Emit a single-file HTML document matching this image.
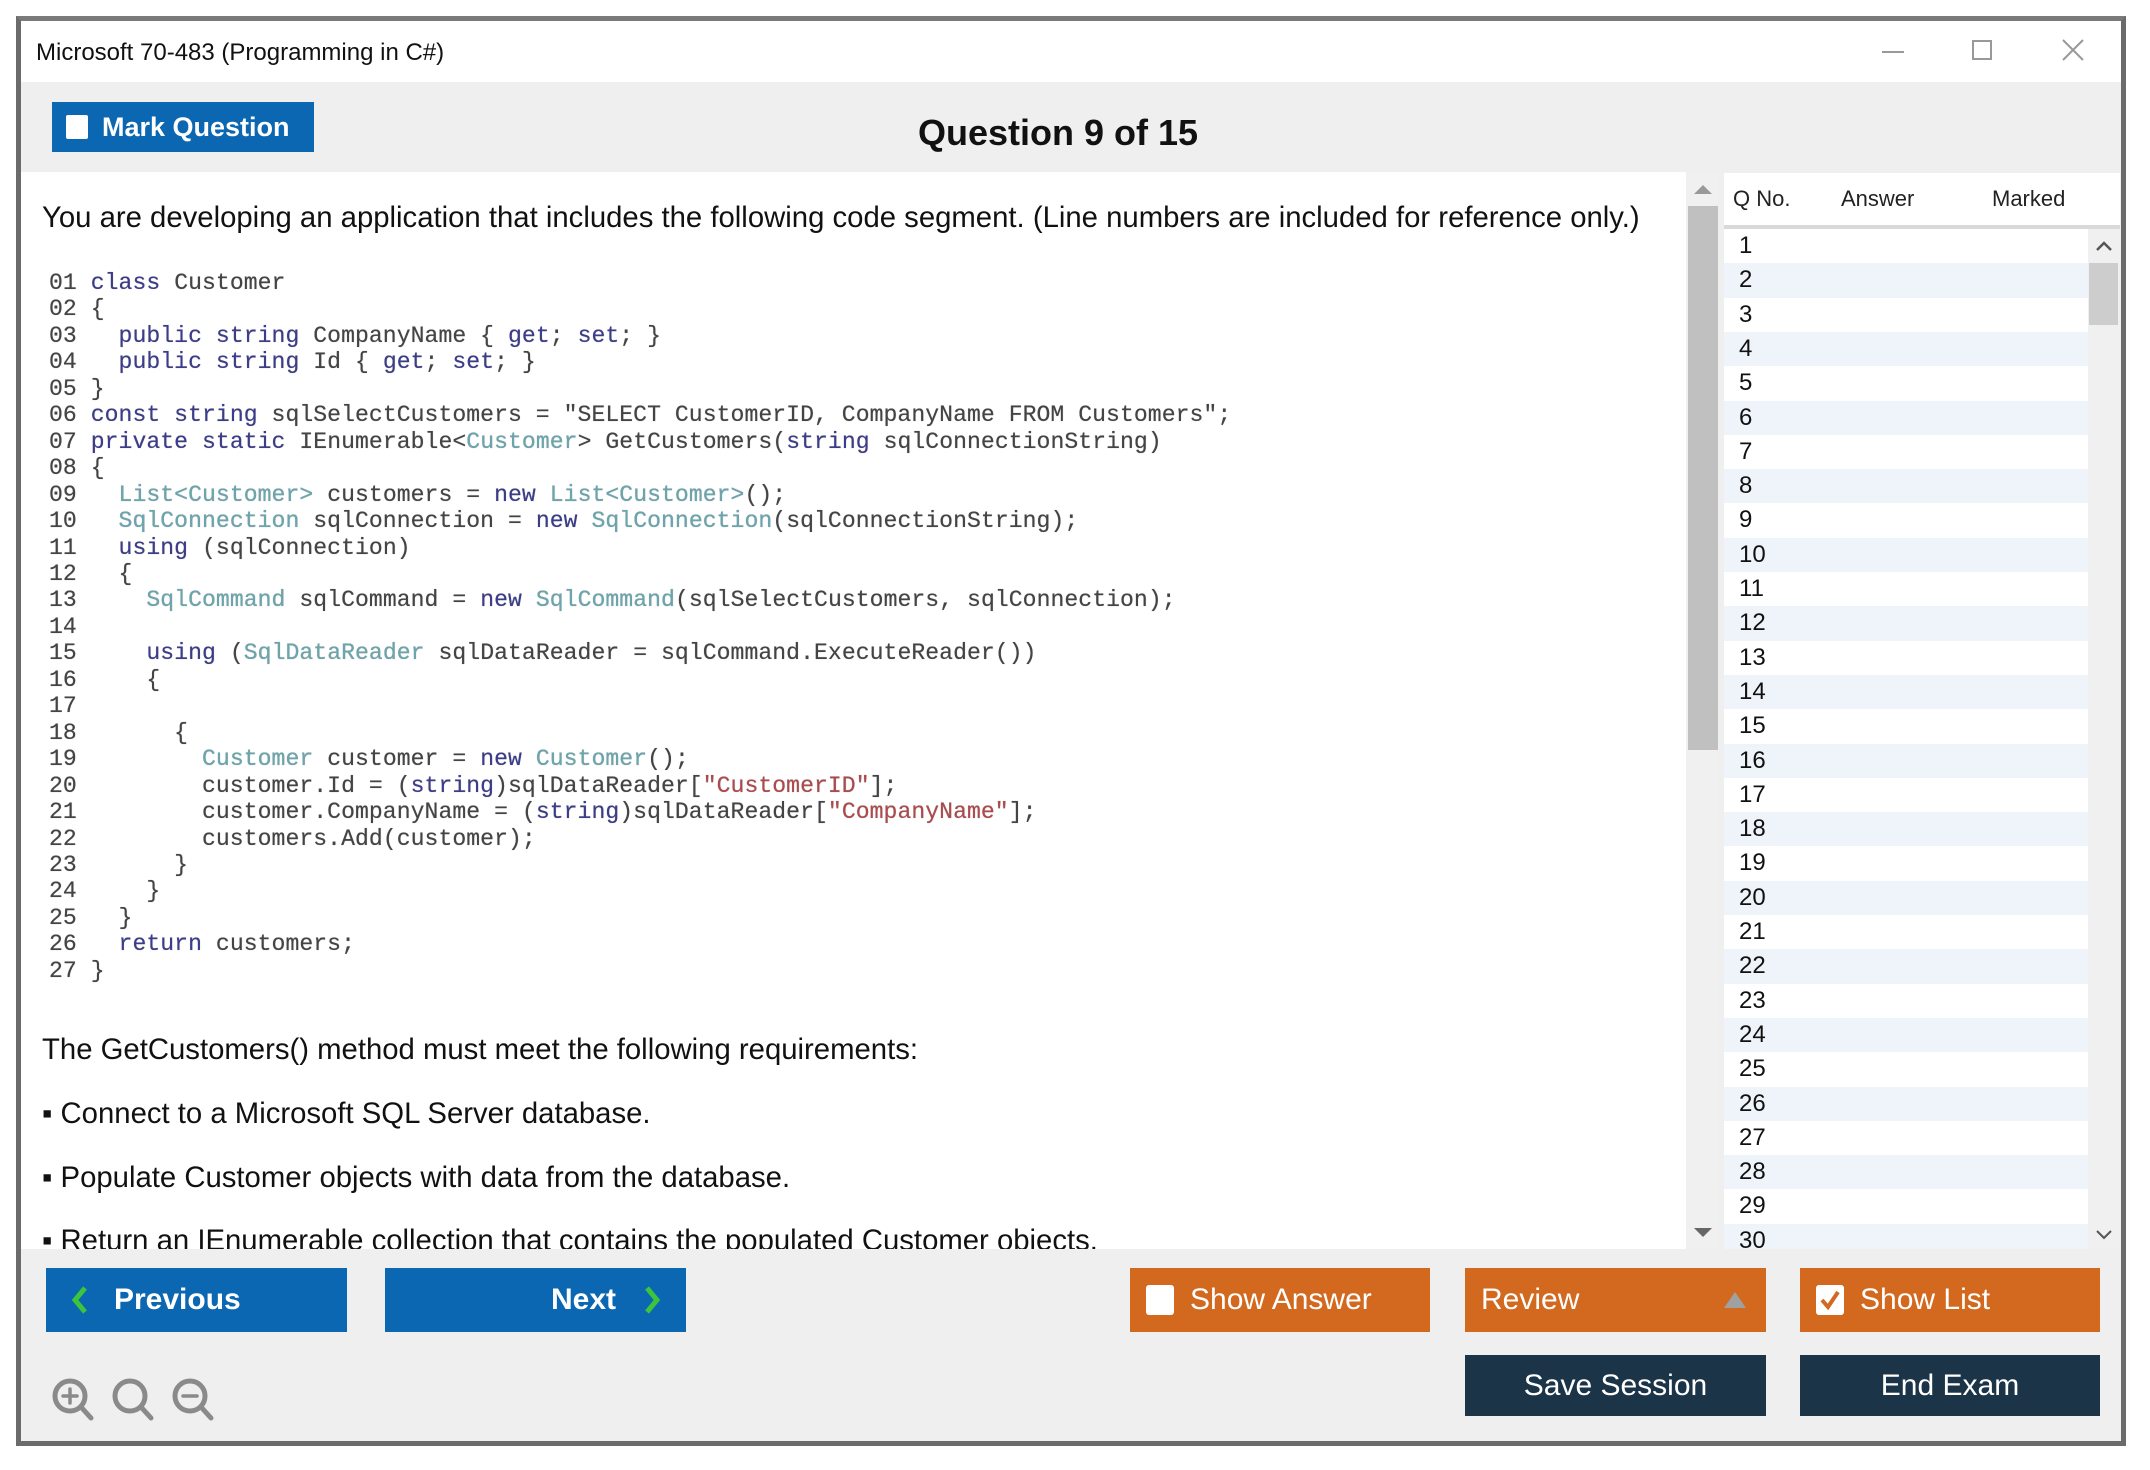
<!DOCTYPE html>
<html><head><meta charset="utf-8"><style>
*{margin:0;padding:0;box-sizing:border-box}
body{width:2150px;height:1470px;background:#fff;position:relative;overflow:hidden;font-family:"Liberation Sans",Arial,sans-serif}
.a{position:absolute}
#frame{left:16px;top:16px;width:2110px;height:1430px;border:5px solid #6b6b6b;background:#efefef;border-top-color:#7a7a7a}
.code{font-family:"Liberation Mono",monospace;font-size:23.1px;line-height:26.45px;color:#444;white-space:pre;letter-spacing:0.05px;text-shadow:0 0 0.6px #666}
.k{color:#3c3c8c}.t{color:#6aa6ae}.s{color:#b0494c}
.txt{font-size:29.3px;color:#111;white-space:nowrap}
.btn{position:absolute;color:#fff;font-size:30px;display:flex;align-items:center}
.blue{background:#0b67b2}.or{background:#d2691f}.dk{background:#1c3448;justify-content:center}
.row{position:absolute;left:1724px;width:364px;height:34.3px;font-size:24px;color:#111;padding-left:15px;line-height:34px}
.alt{background:#eef4f9}
</style></head><body>
<div class="a" id="frame"></div>
<!-- title bar -->
<div class="a" style="left:21px;top:21px;width:2100px;height:61px;background:#fff"></div>
<div class="a" style="left:36px;top:39px;font-size:24px;color:#111">Microsoft 70-483 (Programming in C#)</div>
<div class="a" style="left:1882px;top:51px;width:22px;height:2px;background:#999"></div>
<div class="a" style="left:1972px;top:40px;width:20px;height:20px;border:2px solid #999"></div>
<svg class="a" style="left:2062px;top:39px" width="22" height="22"><path d="M1 1L21 21M21 1L1 21" stroke="#999" stroke-width="2"/></svg>
<!-- header band -->
<div class="btn blue" style="left:52px;top:102px;width:262px;height:50px;font-weight:bold;font-size:27px"><span style="display:inline-block;width:22px;height:24px;background:#fff;border-radius:2px;margin:0 14px 0 14px"></span>Mark Question</div>
<div class="a" style="left:918px;top:112px;font-weight:bold;font-size:36px;color:#111">Question 9 of 15</div>
<!-- content -->
<div class="a" style="left:21px;top:172px;width:1665px;height:1077px;background:#fff;overflow:hidden">
<div class="a txt" style="left:21px;top:29px">You are developing an application that includes the following code segment. (Line numbers are included for reference only.)</div>
<div class="a code" style="left:28px;top:98px">01 <span class="k">class</span> Customer
02 {
03   <span class="k">public string</span> CompanyName { <span class="k">get</span>; <span class="k">set</span>; }
04   <span class="k">public string</span> Id { <span class="k">get</span>; <span class="k">set</span>; }
05 }
06 <span class="k">const string</span> sqlSelectCustomers = "SELECT CustomerID, CompanyName FROM Customers";
07 <span class="k">private static</span> IEnumerable&lt;<span class="t">Customer</span>&gt; GetCustomers(<span class="k">string</span> sqlConnectionString)
08 {
09   <span class="t">List&lt;Customer&gt;</span> customers = <span class="k">new</span> <span class="t">List&lt;Customer&gt;</span>();
10   <span class="t">SqlConnection</span> sqlConnection = <span class="k">new</span> <span class="t">SqlConnection</span>(sqlConnectionString);
11   <span class="k">using</span> (sqlConnection)
12   {
13     <span class="t">SqlCommand</span> sqlCommand = <span class="k">new</span> <span class="t">SqlCommand</span>(sqlSelectCustomers, sqlConnection);
14
15     <span class="k">using</span> (<span class="t">SqlDataReader</span> sqlDataReader = sqlCommand.ExecuteReader())
16     {
17
18       {
19         <span class="t">Customer</span> customer = <span class="k">new</span> <span class="t">Customer</span>();
20         customer.Id = (<span class="k">string</span>)sqlDataReader[<span class="s">"CustomerID"</span>];
21         customer.CompanyName = (<span class="k">string</span>)sqlDataReader[<span class="s">"CompanyName"</span>];
22         customers.Add(customer);
23       }
24     }
25   }
26   <span class="k">return</span> customers;
27 }</div>
<div class="a txt" style="left:21px;top:861px">The GetCustomers() method must meet the following requirements:</div>
<div class="a txt" style="left:21px;top:925px">▪ Connect to a Microsoft SQL Server database.</div>
<div class="a txt" style="left:21px;top:989px">▪ Populate Customer objects with data from the database.</div>
<div class="a txt" style="left:21px;top:1052px">▪ Return an IEnumerable collection that contains the populated Customer objects.</div>
</div>
<!-- content scrollbar -->
<div class="a" style="left:1686px;top:172px;width:32px;height:1077px;background:#f0f0f0"></div>
<div class="a" style="left:1688px;top:206px;width:30px;height:544px;background:#c0c0c0"></div>
<svg class="a" style="left:1694px;top:184px" width="18" height="10"><path d="M0 10L9 1L18 10Z" fill="#999"/></svg>
<svg class="a" style="left:1694px;top:1228px" width="18" height="10"><path d="M0 0L9 9L18 0Z" fill="#666"/></svg>
<!-- list -->
<div class="a" style="left:1724px;top:173px;width:396px;height:52px;background:#fff;font-size:22px;color:#222"><span class="a" style="left:9px;top:13px">Q No.</span><span class="a" style="left:117px;top:13px">Answer</span><span class="a" style="left:268px;top:13px">Marked</span></div>
<div class="a" style="left:1724px;top:225px;width:396px;height:4px;background:#d9d9d9"></div>
<div class="a" style="left:1724px;top:229px;width:396px;height:1020px;background:#fff;overflow:hidden">
<div style="position:relative;left:-1724px;top:-229px">
<div class="row" style="top:229px">1</div><div class="row alt" style="top:263.3px">2</div><div class="row" style="top:297.6px">3</div><div class="row alt" style="top:331.9px">4</div><div class="row" style="top:366.2px">5</div><div class="row alt" style="top:400.5px">6</div><div class="row" style="top:434.8px">7</div><div class="row alt" style="top:469.1px">8</div><div class="row" style="top:503.4px">9</div><div class="row alt" style="top:537.7px">10</div><div class="row" style="top:572px">11</div><div class="row alt" style="top:606.3px">12</div><div class="row" style="top:640.6px">13</div><div class="row alt" style="top:674.9px">14</div><div class="row" style="top:709.2px">15</div><div class="row alt" style="top:743.5px">16</div><div class="row" style="top:777.8px">17</div><div class="row alt" style="top:812.1px">18</div><div class="row" style="top:846.4px">19</div><div class="row alt" style="top:880.7px">20</div><div class="row" style="top:915px">21</div><div class="row alt" style="top:949.3px">22</div><div class="row" style="top:983.6px">23</div><div class="row alt" style="top:1017.9px">24</div><div class="row" style="top:1052.2px">25</div><div class="row alt" style="top:1086.5px">26</div><div class="row" style="top:1120.8px">27</div><div class="row alt" style="top:1155.1px">28</div><div class="row" style="top:1189.4px">29</div><div class="row alt" style="top:1223.7px">30</div>
</div></div>
<div class="a" style="left:2088px;top:229px;width:32px;height:1020px;background:#f0f0f0"></div>
<div class="a" style="left:2089px;top:263px;width:29px;height:62px;background:#cdcdcd"></div>
<svg class="a" style="left:2096px;top:241px" width="16" height="10"><path d="M1 9L8 2L15 9" stroke="#555" stroke-width="2.5" fill="none"/></svg>
<svg class="a" style="left:2096px;top:1230px" width="16" height="10"><path d="M1 1L8 8L15 1" stroke="#555" stroke-width="2" fill="none"/></svg>
<!-- bottom buttons -->
<div class="btn blue" style="left:46px;top:1268px;width:301px;height:64px;font-weight:bold;font-size:30px"><svg style="margin:0 26px 0 26px" width="16" height="28"><path d="M13 2L3 14L13 26" stroke="#3dc43d" stroke-width="5" fill="none"/></svg>Previous</div>
<div class="btn blue" style="left:385px;top:1268px;width:301px;height:64px;font-weight:bold;font-size:30px;justify-content:flex-end">Next<svg style="margin:0 26px 0 28px" width="16" height="28"><path d="M3 2L13 14L3 26" stroke="#3dc43d" stroke-width="5" fill="none"/></svg></div>
<div class="btn or" style="left:1130px;top:1268px;width:300px;height:64px"><span style="display:inline-block;width:28px;height:30px;background:#fff;border-radius:3px;margin:0 16px 0 16px"></span>Show Answer</div>
<div class="btn or" style="left:1465px;top:1268px;width:301px;height:64px;padding-left:16px">Review<svg style="position:absolute;right:20px;top:24px" width="22" height="16"><path d="M0 16L11 0L22 16Z" fill="#a0a0a0"/></svg></div>
<div class="btn or" style="left:1800px;top:1268px;width:300px;height:64px"><svg style="margin:0 16px 0 16px" width="28" height="30"><rect width="28" height="30" rx="3" fill="#fff"/><path d="M6 15L12 22L22 7" stroke="#d2691f" stroke-width="4" fill="none"/></svg>Show List</div>
<div class="btn dk" style="left:1465px;top:1355px;width:301px;height:61px">Save Session</div>
<div class="btn dk" style="left:1800px;top:1355px;width:300px;height:61px">End Exam</div>
<!-- zoom icons -->
<svg class="a" style="left:50px;top:1376px" width="170" height="46">
<g stroke="#8a8a8a" stroke-width="5" fill="none" stroke-linecap="round">
<circle cx="20" cy="20" r="15"/><path d="M31 31L41 42"/><path d="M13 20H27M20 13V27" stroke-width="3.5"/>
<circle cx="80" cy="20" r="15"/><path d="M91 31L101 42"/>
<circle cx="140" cy="20" r="15"/><path d="M151 31L161 42"/><path d="M133 20H147" stroke-width="3.5"/>
</g></svg>
</body></html>
